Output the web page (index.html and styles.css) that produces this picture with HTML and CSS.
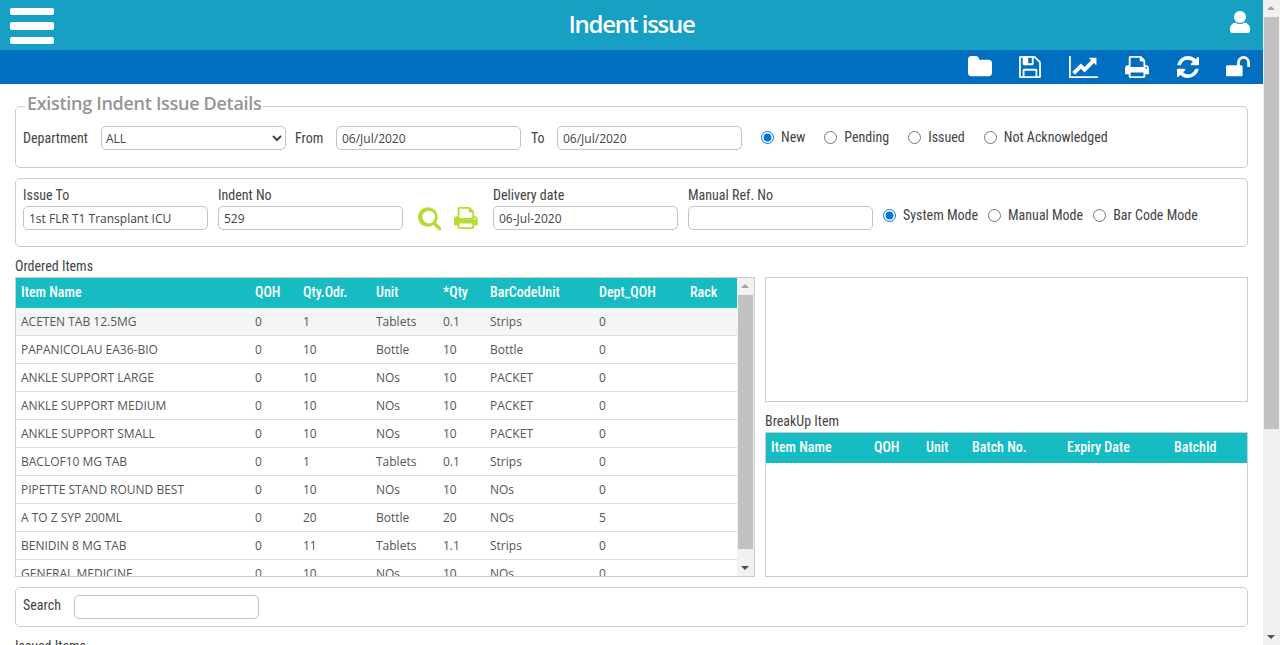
FILE: index.html
```html
<!DOCTYPE html>
<html lang="en">
<head>
    <meta charset="UTF-8">
    <meta name="viewport" content="width=device-width, initial-scale=1.0">
    <title>Indent issue</title>
    <link rel="stylesheet" href="styles.css">
</head>
<body>

<div class="shell">
<div class="page">

    <!-- Title bar -->
    <div class="topbar">
        <div class="burger"><span></span><span></span><span></span></div>
        <h1>Indent issue</h1>
        <svg class="user-icon" viewBox="0 0 20 22"><circle cx="10" cy="6" r="6"/><path d="M5 11.500Q10 15 15 11.500Q20 13 20 18V19.500Q20 22 17.500 22H2.500Q0 22 0 19.500V18Q0 13 5 11.500Z"/></svg>
    </div>

    <!-- Toolbar icons -->
    <div class="toolbar">
        <svg class="tool folder" viewBox="64 128 1664 1408"><path d="M1728 608v704q0 92-66 158t-158 66h-1216q-92 0-158-66t-66-158v-960q0-92 66-158t158-66h320q92 0 158 66t66 158v32h672q92 0 158 66t66 158z"/></svg>
        <svg class="tool save" viewBox="128 128 1536 1536"><path d="M512 1536h768v-384h-768v384zm896 0h128v-896q0-14-10-38.500t-20-34.500l-281-281q-10-10-34-20t-39-10v416q0 40-28 68t-68 28h-576q-40 0-68-28t-28-68v-416h-128v1280h128v-416q0-40 28-68t68-28h832q40 0 68 28t28 68v416zm-384-928v-320q0-13-9.500-22.500t-22.500-9.500h-192q-13 0-22.500 9.500t-9.500 22.500v320q0 13 9.500 22.500t22.500 9.500h192q13 0 22.500-9.500t9.500-22.500zm640 32v928q0 40-28 68t-68 28h-1344q-40 0-68-28t-28-68v-1344q0-40 28-68t68-28h928q40 0 88 20t76 48l280 280q28 28 48 76t20 88z"/></svg>
        <svg class="tool chart" viewBox="0 128 2048 1536"><path d="M2048 1536v128h-2048v-1536h128v1408h1920zm-128-1248v435q0 21-19.500 29.500t-35.500-7.500l-121-121-633 633q-10 10-23 10t-23-10l-233-233-416 416-192-192 585-585q10-10 23-10t23 10l233 233 464-464-121-121q-16-16-7.500-35.500t29.500-19.500h435q14 0 23 9t9 23z"/></svg>
        <svg class="tool print" viewBox="64 128 1664 1536"><path d="M448 1536h896v-256h-896v256zm0-640h896v-384h-160q-40 0-68-28t-28-68v-160h-640v640zm1152 64q0-26-19-45t-45-19-45 19-19 45 19 45 45 19 45-19 19-45zm128 0v416q0 13-9.500 22.500t-22.500 9.500h-224v160q0 40-28 68t-68 28h-960q-40 0-68-28t-28-68v-160h-224q-13 0-22.500-9.500t-9.500-22.500v-416q0-79 56.500-135.500t135.500-56.500h64v-544q0-40 28-68t68-28h672q40 0 88 20t76 48l152 152q28 28 48 76t20 88v256h64q79 0 135.500 56.500t56.500 135.500z"/></svg>
        <svg class="tool refresh" viewBox="128 128 1536 1536"><path d="M1639 1056q0 5-1 7-64 268-268 434.500t-478 166.500q-146 0-282.500-55t-243.500-157l-129 129q-19 19-45 19t-45-19-19-45v-448q0-26 19-45t45-19h448q26 0 45 19t19 45-19 45l-137 137q71 66 161 102t187 36q134 0 250-65t186-179q11-17 53-117 8-23 30-23h192q13 0 22.500 9.500t9.500 22.500zm25-800v448q0 26-19 45t-45 19h-448q-26 0-45-19t-19-45 19-45l138-138q-148-137-349-137-134 0-250 65t-186 179q-11 17-53 117-8 23-30 23h-199q-13 0-22.500-9.500t-9.500-22.500v-7q65-268 270-434.500t480-166.500q146 0 284 55.500t245 156.500l130-129q19-19 45-19t45 19 19 45z"/></svg>
        <svg class="tool unlock" viewBox="64 128 1664 1408"><path d="M1728 576v256q0 26-19 45t-45 19h-64q-26 0-45-19t-19-45v-256q0-106-75-181t-181-75-181 75-75 181v192h96q40 0 68 28t28 68v576q0 40-28 68t-68 28h-960q-40 0-68-28t-28-68v-576q0-40 28-68t68-28h672v-192q0-185 131.500-316.500t316.500-131.500 316.500 131.500 131.500 316.500z"/></svg>
    </div>

    <div class="content">

        <!-- Existing indent filter -->
        <fieldset class="filter-box">
            <legend>Existing Indent Issue Details</legend>
            <div class="filter-row">
                <label class="lbl dept-lbl">Department</label>
                <select class="field dept-select"><option>ALL</option></select>
                <label class="lbl from-lbl">From</label>
                <input class="field" type="text" value="06/Jul/2020">
                <label class="lbl to-lbl">To</label>
                <input class="field" type="text" value="06/Jul/2020">
                <div class="radios status-radios">
                    <label><input type="radio" name="status" checked>New</label>
                    <label><input type="radio" name="status">Pending</label>
                    <label><input type="radio" name="status">Issued</label>
                    <label><input type="radio" name="status">Not Acknowledged</label>
                </div>
            </div>
        </fieldset>

        <!-- Issue details -->
        <div class="issue-box">
            <div class="stack">
                <label class="lbl">Issue To</label>
                <input class="field" type="text" value="1st FLR T1 Transplant ICU">
            </div>
            <div class="stack">
                <label class="lbl">Indent No</label>
                <input class="field" type="text" value="529">
            </div>
            <div class="action-icons">
                <svg class="search-icon" viewBox="0 0 1664 1664"><path d="M1216 704q0-185-131.500-316.500t-316.500-131.500-316.500 131.500-131.500 316.500 131.500 316.500 316.500 131.500 316.500-131.500 131.500-316.500zm448 832q0 52-38 90t-90 38q-54 0-90-38l-343-342q-179 124-399 124-143 0-273.500-55.500t-225-150-150-225-55.500-273.500 55.500-273.500 150-225 225-150 273.500-55.500 273.500 55.500 225 150 150 225 55.500 273.500q0 220-124 399l343 343q37 37 37 90z"/></svg>
                <svg class="green-print" viewBox="64 128 1664 1536"><path d="M448 1536h896v-256h-896v256zm0-640h896v-384h-160q-40 0-68-28t-28-68v-160h-640v640zm1152 64q0-26-19-45t-45-19-45 19-19 45 19 45 45 19 45-19 19-45zm128 0v416q0 13-9.500 22.500t-22.500 9.500h-224v160q0 40-28 68t-68 28h-960q-40 0-68-28t-28-68v-160h-224q-13 0-22.500-9.500t-9.500-22.500v-416q0-79 56.500-135.500t135.500-56.500h64v-544q0-40 28-68t68-28h672q40 0 88 20t76 48l152 152q28 28 48 76t20 88v256h64q79 0 135.500 56.500t56.500 135.500z"/></svg>
            </div>
            <div class="stack">
                <label class="lbl">Delivery date</label>
                <input class="field" type="text" value="06-Jul-2020">
            </div>
            <div class="stack">
                <label class="lbl">Manual Ref. No</label>
                <input class="field" type="text">
            </div>
            <div class="radios mode-radios">
                <label><input type="radio" name="mode" checked>System Mode</label>
                <label><input type="radio" name="mode">Manual Mode</label>
                <label><input type="radio" name="mode">Bar Code Mode</label>
            </div>
        </div>

        <div class="lbl section-lbl">Ordered Items</div>

        <div class="grids">
            <!-- Ordered items grid with its scrollbar -->
            <div class="grid-box ordered">
                <div class="grid-scroll">
                    <table class="grid ordered-table">
                        <colgroup><col class="c-item"><col class="c-qoh"><col class="c-odr"><col class="c-unit"><col class="c-qty"><col class="c-bar"><col class="c-dept"><col></colgroup>
                        <thead>
                            <tr><th>Item Name</th><th>QOH</th><th>Qty.Odr.</th><th>Unit</th><th>*Qty</th><th>BarCodeUnit</th><th>Dept_QOH</th><th>Rack</th></tr>
                        </thead>
                        <tbody>
                            <tr class="selected"><td>ACETEN TAB 12.5MG</td><td>0</td><td>1</td><td>Tablets</td><td>0.1</td><td>Strips</td><td>0</td><td></td></tr>
                            <tr><td>PAPANICOLAU EA36-BIO</td><td>0</td><td>10</td><td>Bottle</td><td>10</td><td>Bottle</td><td>0</td><td></td></tr>
                            <tr><td>ANKLE SUPPORT LARGE</td><td>0</td><td>10</td><td>NOs</td><td>10</td><td>PACKET</td><td>0</td><td></td></tr>
                            <tr><td>ANKLE SUPPORT MEDIUM</td><td>0</td><td>10</td><td>NOs</td><td>10</td><td>PACKET</td><td>0</td><td></td></tr>
                            <tr><td>ANKLE SUPPORT SMALL</td><td>0</td><td>10</td><td>NOs</td><td>10</td><td>PACKET</td><td>0</td><td></td></tr>
                            <tr><td>BACLOF10 MG TAB</td><td>0</td><td>1</td><td>Tablets</td><td>0.1</td><td>Strips</td><td>0</td><td></td></tr>
                            <tr><td>PIPETTE STAND ROUND BEST</td><td>0</td><td>10</td><td>NOs</td><td>10</td><td>NOs</td><td>0</td><td></td></tr>
                            <tr><td>A TO Z SYP 200ML</td><td>0</td><td>20</td><td>Bottle</td><td>20</td><td>NOs</td><td>5</td><td></td></tr>
                            <tr><td>BENIDIN 8 MG TAB</td><td>0</td><td>11</td><td>Tablets</td><td>1.1</td><td>Strips</td><td>0</td><td></td></tr>
                            <tr><td>GENERAL MEDICINE</td><td>0</td><td>10</td><td>NOs</td><td>10</td><td>NOs</td><td>0</td><td></td></tr>
                        </tbody>
                    </table>
                </div>
                <div class="scrollbar inner-bar">
                    <span class="arrow up"></span>
                    <div class="thumb-track"><div class="thumb"></div></div>
                    <span class="arrow down"></span>
                </div>
            </div>

            <div class="right-col">
                <div class="preview-box"></div>
                <div class="lbl breakup-lbl">BreakUp Item</div>
                <div class="grid-box breakup">
                    <table class="grid breakup-table">
                        <colgroup><col class="b-item"><col class="b-qoh"><col class="b-unit"><col class="b-batch"><col class="b-exp"><col></colgroup>
                        <thead>
                            <tr><th>Item Name</th><th>QOH</th><th>Unit</th><th>Batch No.</th><th>Expiry Date</th><th>BatchId</th></tr>
                        </thead>
                    </table>
                </div>
            </div>
        </div>

        <div class="search-box">
            <label class="lbl search-lbl">Search</label>
            <input class="field" type="text">
        </div>

        <div class="lbl issued-lbl">Issued Items</div>
    </div>
</div>

<!-- Page scrollbar -->
<div class="scrollbar page-bar">
    <span class="arrow up"></span>
    <div class="thumb-track"><div class="thumb"></div></div>
    <span class="arrow down"></span>
</div>
</div>

</body>
</html>
```

FILE: styles.css
```css
html, body {
    margin: 0;
    height: 645px;
    overflow: hidden;
    background: #fff;
}

body {
    font-family: "Open Sans", sans-serif;
    font-size: 12px;
    color: #555;
}

.shell {
    display: flex;
    height: 645px;
}

.page {
    flex: 1;
    min-width: 0;
    overflow: hidden;
}

/* Title bar */
.topbar {
    height: 50px;
    background-color: #17a0c4;
    display: flex;
    align-items: center;
    justify-content: space-between;
    padding: 0 13px 0 10px;
    position: relative;
}

.topbar h1 {
    margin: 0;
    padding-bottom: 3px;
    font-size: 24px;
    font-weight: 600;
    letter-spacing: -1.3px;
    color: #fff;
    position: absolute;
    left: 0;
    right: 0;
    text-align: center;
}

.burger {
    width: 43.500px;
    display: flex;
    flex-direction: column;
    gap: 7px;
    margin-top: 2px;
}

.burger span {
    height: 7.500px;
    background: #fff;
    border-radius: 2px;
}

.user-icon {
    width: 20px;
    height: 22px;
    fill: #fff;
    margin-bottom: 6px;
}

/* Toolbar */
.toolbar {
    box-sizing: border-box;
    height: 34px;
    background-color: #006fc0;
    display: flex;
    align-items: center;
    justify-content: flex-end;
    gap: 27.400px;
    padding: 0 13px 1px 0;
}

.tool {
    fill: #fff;
    height: 22px;
    width: 22px;
}

.folder, .unlock {
    width: 24px;
    height: 20.300px;
}

.chart {
    width: 29.300px;
}

.print {
    width: 24px;
}

/* Content */
.content {
    padding: 0 15px;
}

.lbl, .radios {
    font-family: "Roboto", sans-serif;
    font-stretch: condensed;
    font-size: 14px;
    color: #444;
}

.field {
    box-sizing: border-box;
    width: 185px;
    height: 24px;
    border: 1px solid #c4c4c4;
    border-radius: 5px;
    padding: 0 5px;
    font-family: "Open Sans", sans-serif;
    font-size: 12px;
    color: #444;
    background: #fff;
    outline: none;
}

.dept-select {
    padding: 0;
}

.filter-box {
    margin: 8px 0 0;
    padding: 0 7px;
    height: 76px;
    box-sizing: border-box;
    border: 1px solid #ccc;
    border-radius: 5px;
}

.filter-box legend {
    margin-left: 2px;
    padding: 0 2px 6px;
    font-size: 18px;
    font-weight: 600;
    letter-spacing: -0.3px;
    line-height: 22px;
    color: #959595;
}

.filter-row {
    display: flex;
    align-items: center;
    height: 24px;
    margin-top: 6px;
}

.dept-lbl { width: 78px; }
.from-lbl { margin-left: 9px; width: 41px; }
.to-lbl { margin-left: 10px; width: 26px; }

.radios {
    display: flex;
    align-items: center;
}

.radios label {
    display: flex;
    align-items: center;
}

.radios input {
    width: 13px;
    height: 13px;
    margin: 0 7px 0 0;
    accent-color: #0075d8;
}

.status-radios {
    margin-left: 19px;
    gap: 19px;
    margin-top: -2px;
}

.issue-box {
    box-sizing: border-box;
    height: 69px;
    margin-top: 10px;
    border: 1px solid #ccc;
    border-radius: 5px;
    padding: 8px 7px 0;
    display: flex;
    gap: 10px;
}

.stack {
    display: flex;
    flex-direction: column;
}

.stack .lbl {
    height: 19px;
    line-height: 17px;
}

.action-icons {
    display: flex;
    gap: 13px;
    width: 60px;
    margin: 20px 5px 0 5px;
}

.search-icon {
    width: 23.500px;
    height: 23.500px;
    fill: #b5dc35;
}

.green-print {
    width: 24px;
    height: 22px;
    fill: #b5dc35;
}

.mode-radios {
    height: 24px;
    gap: 10px;
    margin-top: 16px;
}

.section-lbl {
    height: 20px;
    line-height: 19px;
    margin-top: 9px;
    padding-top: 1px;
}

/* Grids */
.grids {
    display: flex;
    gap: 10px;
    height: 300px;
}

.grid-box {
    box-sizing: border-box;
    border: 1px solid #ccc;
    overflow: hidden;
}

.ordered {
    width: 740px;
    display: flex;
}

.grid-scroll {
    flex: 1;
    overflow: hidden;
}

.grid {
    table-layout: fixed;
    width: 100%;
    border-collapse: separate;
    border-spacing: 0;
}

.grid th {
    height: 30px;
    padding: 0 5px 2px;
    box-sizing: border-box;
    background-color: #17bcc3;
    color: #fff;
    text-align: left;
    font-family: "Roboto", sans-serif;
    font-stretch: condensed;
    font-size: 14px;
    font-weight: 500;
}

.grid td {
    height: 28px;
    box-sizing: border-box;
    padding: 0 5px;
    border-bottom: 1px solid #ddd;
    white-space: nowrap;
    overflow: hidden;
}

.selected td {
    background-color: #f5f5f5;
}

.c-item { width: 234px; }
.c-qoh { width: 48px; }
.c-odr { width: 73px; }
.c-unit { width: 67px; }
.c-qty { width: 47px; }
.c-bar { width: 109px; }
.c-dept { width: 91px; }

.b-item { width: 103px; }
.b-qoh { width: 52px; }
.b-unit { width: 46px; }
.b-batch { width: 95px; }
.b-exp { width: 107px; }

.right-col {
    width: 483px;
    display: flex;
    flex-direction: column;
}

.preview-box {
    box-sizing: border-box;
    height: 125px;
    border: 1px solid #ccc;
}

.breakup-lbl {
    height: 30px;
    line-height: 38px;
}

.breakup {
    flex: 1;
}

/* Fake scrollbars */
.scrollbar {
    width: 17px;
    flex: none;
    background-color: #f1f1f1;
    display: flex;
    flex-direction: column;
    align-items: center;
}

.arrow {
    flex: none;
    width: 17px;
    height: 17px;
    position: relative;
}

.arrow::after {
    content: "";
    position: absolute;
    left: 4px;
    border-left: 4px solid transparent;
    border-right: 4px solid transparent;
}

.arrow.up::after {
    top: 6px;
    border-bottom: 4px solid #a3a3a3;
}

.arrow.down::after {
    top: 7px;
    border-top: 4px solid #505050;
}

.thumb-track {
    flex: 1;
    width: 100%;
    box-sizing: border-box;
    padding: 0 1px;
}

.thumb {
    background-color: #c1c1c1;
}

.inner-bar .thumb {
    height: 254px;
}

.page-bar .thumb {
    height: 412px;
}

/* Search */
.search-box {
    box-sizing: border-box;
    height: 40px;
    margin-top: 10px;
    border: 1px solid #ccc;
    border-radius: 5px;
    padding: 0 7px;
    display: flex;
    align-items: center;
}

.search-lbl {
    width: 51px;
    margin-top: -5px;
}

.issued-lbl {
    margin-top: 10px;
    line-height: 18px;
}
```
